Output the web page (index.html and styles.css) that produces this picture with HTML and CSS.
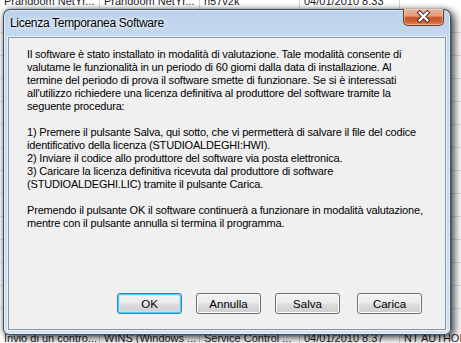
FILE: index.html
```html
<!DOCTYPE html>
<html lang="it">
<head>
<meta charset="utf-8">
<title>Licenza Temporanea Software</title>
<link rel="stylesheet" href="styles.css">
</head>
<body>
<div class="desktop">
  <div class="list">
    <div class="row row-top">
      <span class="cell">Prandoom NetYr...</span>
      <span class="cell">Prandoom NetYr...</span>
      <span class="cell">h57v2k</span>
      <span class="cell">04/01/2010 8.33</span>
      <span class="cell"></span>
    </div>
    <div class="rows-mid"></div>
    <div class="row row-bottom">
      <span class="cell">Invio di un contro...</span>
      <span class="cell">WINS (Windows ...</span>
      <span class="cell">Service Control ...</span>
      <span class="cell">04/01/2010 8.37</span>
      <span class="cell">NT AUTHOR</span>
    </div>
  </div>

  <div class="dialog">
    <div class="titlebar">
      <span class="title">Licenza Temporanea Software</span>
      <button class="close" aria-label="Chiudi">
        <svg width="41" height="17" viewBox="0 0 41 17">
          <path d="M16.5 4.5 L24.5 12.5 M24.5 4.5 L16.5 12.5" stroke="#3b2a25" stroke-width="4.4" stroke-linecap="square" fill="none"/>
          <path d="M16.5 4.5 L24.5 12.5 M24.5 4.5 L16.5 12.5" stroke="#ffffff" stroke-width="2.4" stroke-linecap="square" fill="none"/>
        </svg>
      </button>
    </div>
    <div class="client">
      <div class="message">
        <p>Il software è stato installato in modalità di valutazione. Tale modalità consente di<br>
        valutame le funzionalità in un periodo di 60 giomi dalla data di installazione. Al<br>
        termine del periodo di prova il software smette di funzionare. Se si è interessati<br>
        all'utilizzo richiedere una licenza definitiva al produttore del software tramite la<br>
        seguente procedura:</p>
        <p>1) Premere il pulsante Salva, qui sotto, che vi permetterà di salvare il file del codice<br>
        identificativo della licenza (STUDIOALDEGHI:HWI).<br>
        2) Inviare il codice allo produttore del software via posta elettronica.<br>
        3) Caricare la licenza definitiva ricevuta dal produttore di software<br>
        (STUDIOALDEGHI.LIC) tramite il pulsante Carica.</p>
        <p>Premendo il pulsante OK il software continuerà a funzionare in modalità valutazione,<br>
        mentre con il pulsante annulla si termina il programma.</p>
      </div>
      <div class="buttons">
        <button class="btn btn-default">OK</button>
        <button class="btn">Annulla</button>
        <button class="btn">Salva</button>
        <button class="btn btn-last">Carica</button>
      </div>
    </div>
  </div>
</div>
</body>
</html>
```

FILE: styles.css
```css
* { box-sizing: border-box; }

html, body {
  margin: 0;
  padding: 0;
  background: #ffffff;
}

.desktop {
  position: relative;
  width: 461px;
  height: 343px;
  overflow: hidden;
  font-family: "Liberation Sans", Arial, sans-serif;
  font-size: 11px;
  color: #000;
}

/* background list view */
.list {
  display: flex;
  flex-direction: column;
  width: 461px;
}

.row {
  display: grid;
  grid-template-columns: 100px 100px 100px 100px 100px;
  height: 17px;
  flex: none;
}

.row-top { margin-top: -7px; }

.cell {
  border-right: 1px solid #d4d4d4;
  padding: 0 0 0 4px;
  line-height: 17px;
  white-space: nowrap;
  overflow: hidden;
  color: #1a1a2a;
}

.rows-mid {
  height: 320px;
  flex: none;
  background:
    repeating-linear-gradient(90deg, transparent 0 99px, #d4d4d4 99px 100px),
    repeating-linear-gradient(180deg, transparent 0 22px, #e2e2e2 22px 23px);
}

/* dialog window */
.dialog {
  position: absolute;
  left: 3px;
  top: 9px;
  width: 448px;
  height: 326px;
  display: flex;
  flex-direction: column;
  border: 1px solid rgba(38, 52, 70, 0.85);
  border-radius: 7px 7px 6px 6px;
  background: linear-gradient(180deg, #bad1ea 0px, #c5d9ee 27px, #c7daee 60%, #cfe0f1 100%);
  box-shadow:
    inset 0 0 0 1px rgba(255, 255, 255, 0.55),
    4px 3px 9px rgba(0, 0, 0, 0.65),
    0 0 5px rgba(0, 0, 0, 0.4);
}

.titlebar {
  display: flex;
  align-items: flex-start;
  height: 27px;
  flex: none;
  padding-left: 6px;
}

.title {
  padding-top: 5px;
  line-height: 16px;
  font-size: 12px;
  letter-spacing: -0.3px;
  color: #000;
  text-shadow: 0 0 6px rgba(255, 255, 255, 0.9), 0 0 3px rgba(255, 255, 255, 0.9);
}

.close {
  margin-left: auto;
  margin-right: 6px;
  margin-top: -1px;
  width: 41px;
  height: 17px;
  padding: 0;
  border: 1px solid #6f3a28;
  border-top: none;
  border-radius: 0 0 5px 5px;
  background: linear-gradient(180deg, #ebb49c 0%, #e19a7a 45%, #c9562c 52%, #cb5f31 78%, #df8e5c 100%);
  box-shadow: inset 0 0 0 1px rgba(255, 225, 205, 0.45);
  display: flex;
  align-items: center;
  justify-content: center;
}

.close svg { display: block; margin-top: -1px; }

.client {
  flex: 1;
  margin: 0 4px 4px 4px;
  display: flex;
  flex-direction: column;
  background: #f0f0f0;
  border: 1px solid #8796a8;
  box-shadow: 0 0 0 1px rgba(255, 255, 255, 0.6);
}

.message {
  flex: 1;
  padding: 10px 0 0 18px;
  line-height: 13px;
  letter-spacing: -0.18px;
  white-space: nowrap;
}

.message p { margin: 0 0 13px 0; }

.buttons {
  display: flex;
  justify-content: flex-end;
  gap: 14px;
  padding: 0 23px 15px 0;
}

.btn {
  width: 65px;
  height: 21px;
  padding: 0;
  font-family: "Liberation Sans", Arial, sans-serif;
  font-size: 11.5px;
  color: #000;
  border: 1px solid #707070;
  border-radius: 3px;
  background: linear-gradient(180deg, #f2f2f2 0%, #ebebeb 48%, #dddddd 52%, #cfcfcf 100%);
  box-shadow: inset 0 0 0 1px #fbfbfb;
}

.btn-default {
  border-color: #3c7fb1;
  box-shadow: inset 0 0 0 1px #48d0f6, inset 0 0 0 2px rgba(180, 235, 252, 0.8);
}

.btn-last { margin-left: 3px; }
```
